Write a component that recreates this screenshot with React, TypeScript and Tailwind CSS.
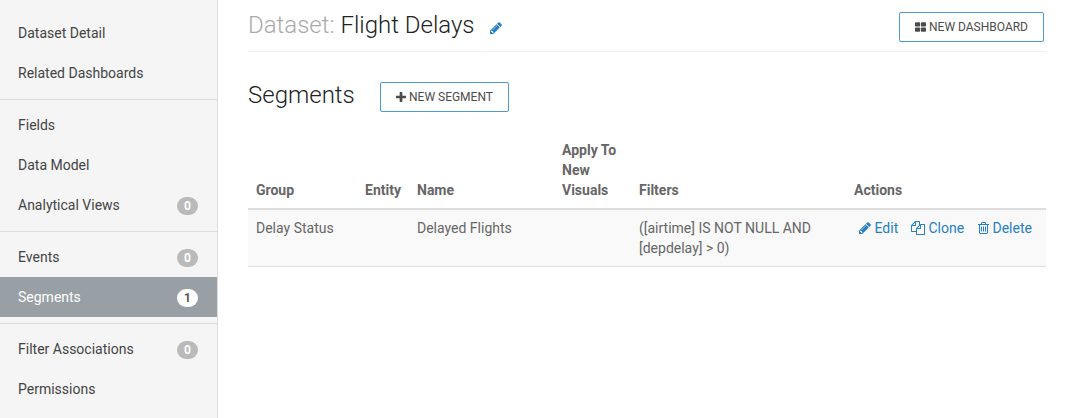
import type { ReactNode } from 'react';

interface IconProps {
  className?: string;
}

interface NavItem {
  label: string;
  count?: number;
}

const navGroups: NavItem[][] = [
  [{ label: 'Dataset Detail' }, { label: 'Related Dashboards' }],
  [{ label: 'Fields' }, { label: 'Data Model' }, { label: 'Analytical Views', count: 0 }],
  [{ label: 'Events', count: 0 }, { label: 'Segments', count: 1 }],
  [{ label: 'Filter Associations', count: 0 }, { label: 'Permissions' }],
];

const segments = [
  {
    group: 'Delay Status',
    entity: '',
    name: 'Delayed Flights',
    apply: '',
    filters: '([airtime] IS NOT NULL AND [depdelay] > 0)',
  },
];

function PencilIcon({ className = '' }: IconProps) {
  return (
    <svg viewBox="128 0 1536 1792" fill="currentColor" className={`h-3.5 w-3 shrink-0 ${className}`}>
      <path d="M491 1536l91-91-235-235-91 91v107h128v128h107zm523-928q0-22-22-22-10 0-17 7l-542 542q-7 7-7 17 0 22 22 22 10 0 17-7l542-542q7-7 7-17zm-54-192l416 416-832 832h-416v-416zm683 96q0 53-37 90l-166 166-416-416 166-165q36-38 90-38 53 0 91 38l235 234q37 39 37 91z" />
    </svg>
  );
}

function CopyIcon({ className = '' }: IconProps) {
  return (
    <svg viewBox="0 0 1792 1792" fill="currentColor" className={`size-3.5 shrink-0 ${className}`}>
      <path d="M1696 384q40 0 68 28t28 68v1216q0 40-28 68t-68 28h-960q-40 0-68-28t-28-68v-288h-544q-40 0-68-28t-28-68v-672q0-40 20-88t48-76l408-408q28-28 76-48t88-20h416q40 0 68 28t28 68v328q68-40 128-40h416zm-544 213l-299 299h299v-299zm-640-384l-299 299h299v-299zm196 647l316-316v-416h-384v416q0 40-28 68t-68 28h-416v640h512v-256q0-40 20-88t48-76zm956 804v-1152h-384v416q0 40-28 68t-68 28h-416v640h896z" />
    </svg>
  );
}

function TrashIcon({ className = '' }: IconProps) {
  return (
    <svg viewBox="192 0 1408 1792" fill="currentColor" className={`h-3.5 w-[11px] shrink-0 ${className}`}>
      <path d="M704 736v576q0 14-9 23t-23 9h-64q-14 0-23-9t-9-23v-576q0-14 9-23t23-9h64q14 0 23 9t9 23zm256 0v576q0 14-9 23t-23 9h-64q-14 0-23-9t-9-23v-576q0-14 9-23t23-9h64q14 0 23 9t9 23zm256 0v576q0 14-9 23t-23 9h-64q-14 0-23-9t-9-23v-576q0-14 9-23t23-9h64q14 0 23 9t9 23zm128 724v-948h-896v948q0 22 7 40.5t14.5 27 10.5 8.5h832q3 0 10.5-8.5t14.5-27 7-40.5zm-672-1076h448l-48-117q-7-9-17-11h-317q-10 2-17 11zm928 32v64q0 14-9 23t-23 9h-96v948q0 83-47 143.5t-113 60.5h-832q-66 0-113-58.5t-47-141.5v-952h-96q-14 0-23-9t-9-23v-64q0-14 9-23t23-9h309l70-167q15-37 54-63t79-26h320q40 0 79 26t54 63l70 167h309q14 0 23 9t9 23z" />
    </svg>
  );
}

function PlusIcon() {
  return (
    <svg viewBox="192 128 1408 1408" fill="currentColor" className="size-[10px] shrink-0">
      <path d="M1600 736v192q0 40-28 68t-68 28h-416v416q0 40-28 68t-68 28h-192q-40 0-68-28t-28-68v-416h-416q-40 0-68-28t-28-68v-192q0-40 28-68t68-28h416v-416q0-40 28-68t68-28h192q40 0 68 28t28 68v416h416q40 0 68 28t28 68z" />
    </svg>
  );
}

function GridIcon() {
  return (
    <svg viewBox="0 0 11 10" fill="currentColor" className="h-[10px] w-[11px] shrink-0">
      <rect x="0" y="0.2" width="5.1" height="4.4" rx="0.8" />
      <rect x="5.9" y="0.2" width="5.1" height="4.4" rx="0.8" />
      <rect x="0" y="5.4" width="5.1" height="4.4" rx="0.8" />
      <rect x="5.9" y="5.4" width="5.1" height="4.4" rx="0.8" />
    </svg>
  );
}

function OutlineButton({ className = '', children }: { className?: string; children: ReactNode }) {
  return (
    <button
      className={`flex h-[30px] items-center justify-center gap-[3px] rounded-[2px] border border-[#4d9ad3] bg-white text-xs whitespace-nowrap text-[#4c4c4c] uppercase ${className}`}
    >
      {children}
    </button>
  );
}

function Sidebar({ active }: { active: string }) {
  return (
    <nav className="w-[218px] shrink-0 border-r border-[#ddd] bg-[#f5f5f5] pt-[7px]">
      {navGroups.map((items, i) => (
        <ul key={i} className={i === 0 ? 'pt-1.5 pb-1.5' : 'border-t border-[#ddd] pt-[5px] pb-1.5'}>
          {items.map(item => {
            const isActive = item.label === active;
            return (
              <li
                key={item.label}
                className={`flex h-10 items-center justify-between pr-[19px] pl-[18px] ${isActive ? 'bg-[#99a0a5] text-white' : 'text-[#444]'}`}
              >
                <span>{item.label}</span>
                {item.count !== undefined && (
                  <span
                    className={`mt-[2px] flex h-[18px] w-[21px] items-center justify-center rounded-full text-xs font-bold ${isActive ? 'bg-white text-[#555]' : 'bg-[#bababa] text-white'}`}
                  >
                    {item.count}
                  </span>
                )}
              </li>
            );
          })}
        </ul>
      ))}
    </nav>
  );
}

function SegmentTable() {
  return (
    <table className="mt-5 w-[798px] table-fixed border-collapse text-left leading-5 text-[#666]">
      <colgroup>
        <col className="w-[109px]" />
        <col className="w-[52px]" />
        <col className="w-[145px]" />
        <col className="w-[77px]" />
        <col className="w-[215px]" />
        <col className="w-[200px]" />
      </colgroup>
      <thead>
        <tr className="border-b-2 border-[#ddd] align-bottom">
          <th className="p-2 font-bold">Group</th>
          <th className="p-2 font-bold">Entity</th>
          <th className="p-2 font-bold">Name</th>
          <th className="p-2 font-bold">Apply To New Visuals</th>
          <th className="p-2 font-bold">Filters</th>
          <th className="p-2 font-bold">Actions</th>
        </tr>
      </thead>
      <tbody>
        {segments.map(s => (
          <tr key={s.name} className="border-b border-[#ddd] bg-[#f9f9f9] align-top">
            <td className="p-2">{s.group}</td>
            <td className="p-2">{s.entity}</td>
            <td className="p-2">{s.name}</td>
            <td className="p-2">{s.apply}</td>
            <td className="p-2">{s.filters}</td>
            <td className="p-2">
              <div className="flex pl-[5px] text-[#2580c3]">
                <a className="flex w-[52px] items-center gap-[3.5px]"><PencilIcon />Edit</a>
                <a className="flex w-[67px] items-center gap-[3.5px]"><CopyIcon />Clone</a>
                <a className="flex items-center gap-[3.5px]"><TrashIcon />Delete</a>
              </div>
            </td>
          </tr>
        ))}
      </tbody>
    </table>
  );
}

export default function App() {
  return (
    <div className="flex h-[418px] w-[1075px] overflow-hidden bg-white font-['Roboto',sans-serif] text-sm">
      <Sidebar active="Segments" />
      <main className="flex-1 pl-[30px]">
        <header className="flex h-[52px] w-[798px] items-start justify-between border-b border-[#eee] pr-[2px]">
          <div className="flex items-center pt-[9px]">
            <h1 className="text-2xl leading-8 font-light text-[#222]">
              <span className="text-[#aaa]">Dataset:</span> Flight Delays
            </h1>
            <PencilIcon className="mt-[5px] ml-[15px] text-[#2580c3]" />
          </div>
          <OutlineButton className="mt-3 w-[145px]">
            <GridIcon />
            New Dashboard
          </OutlineButton>
        </header>
        <div className="flex items-center pt-[30px]">
          <h2 className="w-[132px] text-2xl leading-[30px] font-light text-[#222]">
            <span className="relative -top-[2px]">Segments</span>
          </h2>
          <OutlineButton className="w-[129px]">
            <PlusIcon />
            New Segment
          </OutlineButton>
        </div>
        <SegmentTable />
      </main>
    </div>
  );
}
